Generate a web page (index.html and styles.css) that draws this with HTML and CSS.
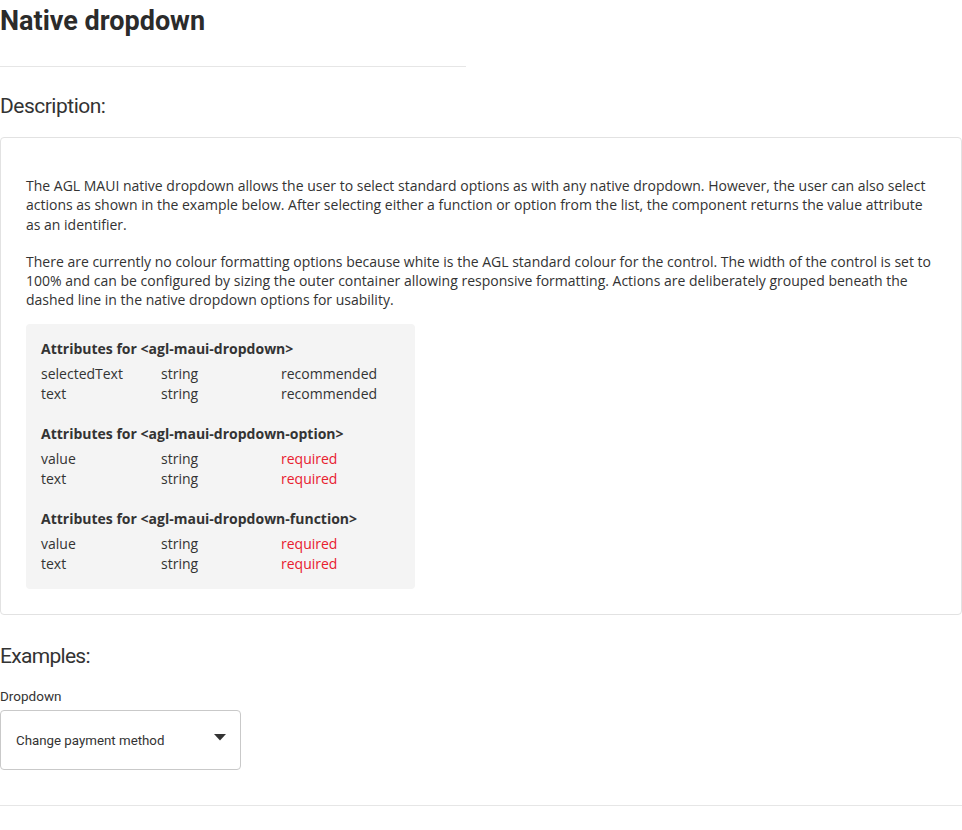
FILE: index.html
```html
<!DOCTYPE html>
<html lang="en">
<head>
<meta charset="utf-8">
<title>Native dropdown</title>
<link rel="stylesheet" href="styles.css">
</head>
<body>
<main class="page">
  <h1 class="title">Native dropdown</h1>
  <hr class="title-rule">
  <h2 class="section-title">Description:</h2>
  <section class="card">
    <p class="para">The AGL MAUI native dropdown allows the user to select standard options as with any native dropdown. However, the user can also select actions as shown in the example below. After selecting either a function or option from the list, the component returns the value attribute as an identifier.</p>
    <p class="para">There are currently no colour formatting options because white is the AGL standard colour for the control. The width of the control is set to 100% and can be configured by sizing the outer container allowing responsive formatting. Actions are deliberately grouped beneath the dashed line in the native dropdown options for usability.</p>
    <div class="attrs">
      <div class="attr-group">
        <h3 class="attr-title">Attributes for &lt;agl-maui-dropdown&gt;</h3>
        <div class="attr-row"><span>selectedText</span><span>string</span><span>recommended</span></div>
        <div class="attr-row"><span>text</span><span>string</span><span>recommended</span></div>
      </div>
      <div class="attr-group">
        <h3 class="attr-title">Attributes for &lt;agl-maui-dropdown-option&gt;</h3>
        <div class="attr-row"><span>value</span><span>string</span><span class="req">required</span></div>
        <div class="attr-row"><span>text</span><span>string</span><span class="req">required</span></div>
      </div>
      <div class="attr-group">
        <h3 class="attr-title">Attributes for &lt;agl-maui-dropdown-function&gt;</h3>
        <div class="attr-row"><span>value</span><span>string</span><span class="req">required</span></div>
        <div class="attr-row"><span>text</span><span>string</span><span class="req">required</span></div>
      </div>
    </div>
  </section>
  <h2 class="section-title examples">Examples:</h2>
  <div class="field-label">Dropdown</div>
  <div class="select">
    <span class="select-text">Change payment method</span>
    <svg class="caret" width="12" height="7" viewBox="0 0 12 7"><path d="M0 0H12L6 6.5Z" fill="#333"/></svg>
  </div>
  <hr class="bottom-rule">
</main>
</body>
</html>
```

FILE: styles.css
```css
html, body {
  margin: 0;
  padding: 0;
  background: #fff;
}
body {
  color: #333;
  font-family: "Open Sans", "Liberation Sans", sans-serif;
}
.page {
  width: 962px;
}
.title {
  margin: 0;
  padding-top: 5px;
  font-family: Roboto, "Liberation Sans", sans-serif;
  font-weight: 700;
  font-size: 27px;
  line-height: 32px;
  letter-spacing: 0;
  color: #2b2b2b;
}
.title-rule {
  width: 466px;
  margin: 29px 0 0 0;
  border: 0;
  border-top: 1px solid #e6e6e6;
  height: 0;
}
.section-title {
  margin: 26px 0 18px 0;
  font-family: Roboto, "Liberation Sans", sans-serif;
  font-weight: 400;
  font-size: 21px;
  line-height: 26px;
  letter-spacing: -0.5px;
  color: #333;
}
.card {
  border: 1px solid #e2e2e2;
  border-radius: 4px;
  padding: 28px 24px 25px 25px;
}
.para {
  margin: 10px 0 18px 0;
  font-size: 14px;
  line-height: 19.3px;
}
.card .para + .para {
  margin-top: 0;
  margin-bottom: 14px;
}
.attrs {
  width: 389px;
  box-sizing: border-box;
  background: #f4f4f4;
  border-radius: 4px;
  padding: 15px 15px 15px 15px;
}
.attr-group + .attr-group {
  margin-top: 20px;
}
.attr-title {
  margin: 0 0 5px 0;
  font-size: 14px;
  font-weight: 700;
  line-height: 20px;
}
.attr-row {
  display: grid;
  grid-template-columns: 120px 120px 1fr;
  font-size: 14px;
  line-height: 20px;
}
.req {
  color: #e8202f;
}
.examples {
  margin-top: 28px;
  margin-bottom: 0;
  letter-spacing: -0.7px;
}
.field-label {
  margin-top: 19px;
  font-family: Roboto, "Liberation Sans", sans-serif;
  font-size: 13.5px;
  line-height: 16px;
  color: #333;
}
.select {
  margin-top: 6px;
  width: 241px;
  height: 60px;
  box-sizing: border-box;
  border: 1px solid #c9c9c9;
  border-radius: 4px;
  display: flex;
  align-items: center;
  justify-content: space-between;
  padding: 0 14px 0 15px;
}
.select-text {
  font-family: Roboto, "Liberation Sans", sans-serif;
  font-size: 13.3px;
  color: #333;
  padding-top: 2px;
}
.caret {
  margin-top: -4px;
}
.bottom-rule {
  margin: 35px 0 0 0;
  border: 0;
  border-top: 1px solid #e6e6e6;
  height: 0;
}
```
